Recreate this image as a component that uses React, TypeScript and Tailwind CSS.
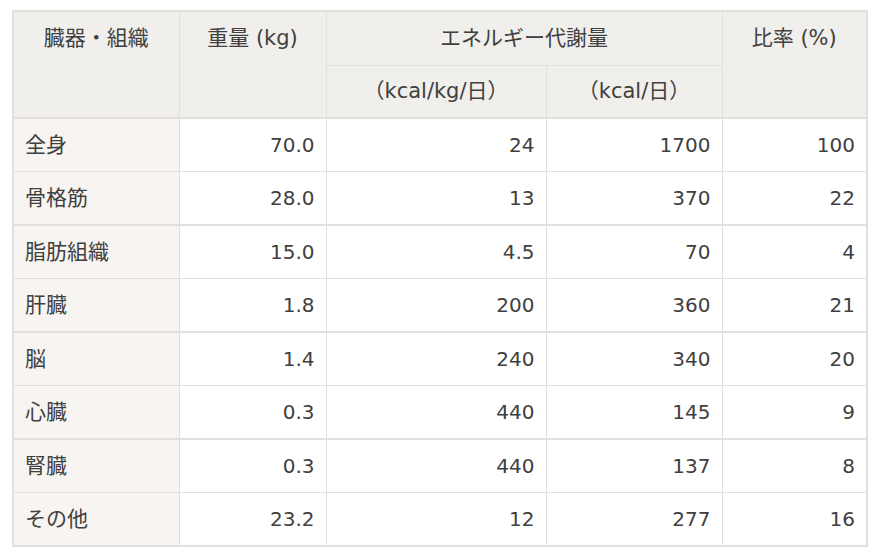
import React from "react";

const rows: { name: string; w: string; a: string; b: string; r: string }[] = [
  { name: "全身", w: "70.0", a: "24", b: "1700", r: "100" },
  { name: "骨格筋", w: "28.0", a: "13", b: "370", r: "22" },
  { name: "脂肪組織", w: "15.0", a: "4.5", b: "70", r: "4" },
  { name: "肝臓", w: "1.8", a: "200", b: "360", r: "21" },
  { name: "脳", w: "1.4", a: "240", b: "340", r: "20" },
  { name: "心臓", w: "0.3", a: "440", b: "145", r: "9" },
  { name: "腎臓", w: "0.3", a: "440", b: "137", r: "8" },
  { name: "その他", w: "23.2", a: "12", b: "277", r: "16" },
];

export default function App() {
  return (
    <div className="w-[874px] h-[556px] bg-white pt-[10px] pl-[12px]">
      <table
        className="table-fixed border-collapse w-[854px] border-2 border-[#e2e0dc] text-[20px] text-[#404040]"
        style={{ fontFamily: '"DejaVu Sans", "Noto Sans CJK JP", sans-serif' }}
      >
        <colgroup>
          <col className="w-[166px]" />
          <col className="w-[147px]" />
          <col className="w-[220px]" />
          <col className="w-[176px]" />
          <col className="w-[145px]" />
        </colgroup>
        <thead className="text-[21px]">
          <tr className="h-[54px]">
            <th rowSpan={2} className="bg-[#f0efeb] border border-[#e2e0dc] border-b-2 align-top pt-[11px] font-normal text-center leading-[30px]">
              臓器・組織
            </th>
            <th rowSpan={2} className="bg-[#f0efeb] border border-[#e2e0dc] border-b-2 align-top pt-[11px] font-normal text-center leading-[30px]">
              重量 (kg)
            </th>
            <th colSpan={2} className="bg-[#f0efeb] border border-[#e2e0dc] font-normal text-center leading-[30px]">
              エネルギー代謝量
            </th>
            <th rowSpan={2} className="bg-[#f0efeb] border border-[#e2e0dc] border-b-2 align-top pt-[11px] font-normal text-center leading-[30px]">
              比率 (%)
            </th>
          </tr>
          <tr className="h-[53px]">
            <th className="bg-[#f0efeb] border border-[#e2e0dc] border-b-2 font-normal text-center leading-[30px]">
              （kcal/kg/日）
            </th>
            <th className="bg-[#f0efeb] border border-[#e2e0dc] border-b-2 font-normal text-center leading-[30px]">
              （kcal/日）
            </th>
          </tr>
        </thead>
        <tbody>
          {rows.map((r, i) => {
            const bottom = i % 2 === 1 ? "border-b-2" : "border-b";
            return (
              <tr key={r.name} className={i % 2 === 0 ? "h-[53px]" : "h-[54px]"}>
                <td className={`bg-[#f7f4f1] border-x border-t border-[#e2e0dc] ${bottom} pl-[11px] leading-[30px] text-[21px]`}>
                  {r.name}
                </td>
                <td className={`bg-white border-x border-t border-[#e2e0dc] ${bottom} pr-[11px] text-right leading-[30px]`}>
                  {r.w}
                </td>
                <td className={`bg-white border-x border-t border-[#e2e0dc] ${bottom} pr-[11px] text-right leading-[30px]`}>
                  {r.a}
                </td>
                <td className={`bg-white border-x border-t border-[#e2e0dc] ${bottom} pr-[11px] text-right leading-[30px]`}>
                  {r.b}
                </td>
                <td className={`bg-white border-x border-t border-[#e2e0dc] ${bottom} pr-[11px] text-right leading-[30px]`}>
                  {r.r}
                </td>
              </tr>
            );
          })}
        </tbody>
      </table>
    </div>
  );
}
